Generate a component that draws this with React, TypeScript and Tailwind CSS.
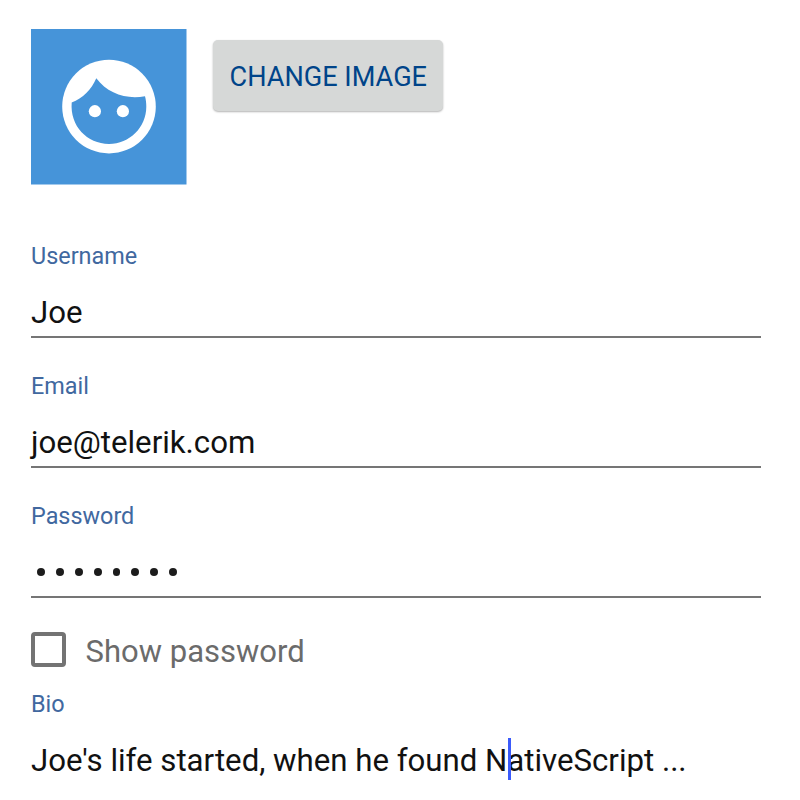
import React from "react";

function Label({ children }: { children: React.ReactNode }) {
  return <div className="h-[30px] text-[23.4px] leading-[30px] text-[#41689f]">{children}</div>;
}

function Field({ label, children }: { label: string; children: React.ReactNode }) {
  return (
    <div className="h-[130px]">
      <Label>{label}</Label>
      <div className="mt-[22px] flex h-[45px] items-start border-b-2 border-[#757575] text-[31.2px] leading-[40px] text-[#111111]">
        {children}
      </div>
    </div>
  );
}

function Avatar() {
  return (
    <svg width="155.5" height="155.5" viewBox="0 0 155.5 155.5" className="block">
      <rect width="155.5" height="155.5" fill="#4694d9" />
      <circle cx="78" cy="77.6" r="46.8" fill="#fff" />
      <path
        d="M65.3 49.3C60.5 60.5 51.8 69.3 40.7 73.6C38.8 97 56 115 78 115C98.6 115 115.3 98.3 115.3 77.8C115.3 74 114.9 70.5 114 67.2C95.5 70.8 76.5 64.5 65.3 49.3Z"
        fill="#4694d9"
      />
      <circle cx="63.9" cy="82.2" r="6.1" fill="#fff" />
      <circle cx="91.9" cy="82.2" r="6.1" fill="#fff" />
    </svg>
  );
}

export default function App() {
  return (
    <main className="h-[800px] w-[800px] overflow-hidden bg-white pl-[31px] pr-[39px] pt-[29px] font-['Roboto',sans-serif]">
      <header className="flex h-[212px] items-start">
        <Avatar />
        <button className="ml-[26.8px] mt-[11.3px] h-[71px] w-[230px] whitespace-nowrap rounded-[5px] bg-[#d6d8d7] pt-[4px] text-[27.1px] leading-[67px] text-[#004489] shadow-[0_1px_2px_rgba(0,0,0,0.3)]">
          CHANGE IMAGE
        </button>
      </header>
      <Field label="Username">Joe</Field>
      <Field label="Email">joe@telerik.com</Field>
      <Field label="Password">
        <div className="flex gap-[11px] pl-[6px] pt-[15px]">
          {Array.from({ length: 8 }, (_, i) => (
            <span key={i} className="h-2 w-[7.9px] rounded-full bg-[#1c1c1c]" />
          ))}
        </div>
      </Field>
      <div className="flex h-[58px] items-start text-[31px] leading-[42px] text-[#6b6b6b]">
        <span className="mt-[1px] h-[35px] w-[35px] rounded-[4px] border-[4px] border-[#737373]" />
        <span className="ml-[19.6px]">Show password</span>
      </div>
      <Label>Bio</Label>
      <div className="mt-[22px] whitespace-nowrap text-[31.2px] leading-[40px] text-[#111111]">
        Joe's life started, when he found N
        <span className="relative">
          <span className="absolute left-[0.5px] -top-[4px] h-[42px] w-[3px] bg-[#3b5bfb]" />
        </span>
        ativeScript ...
      </div>
    </main>
  );
}
